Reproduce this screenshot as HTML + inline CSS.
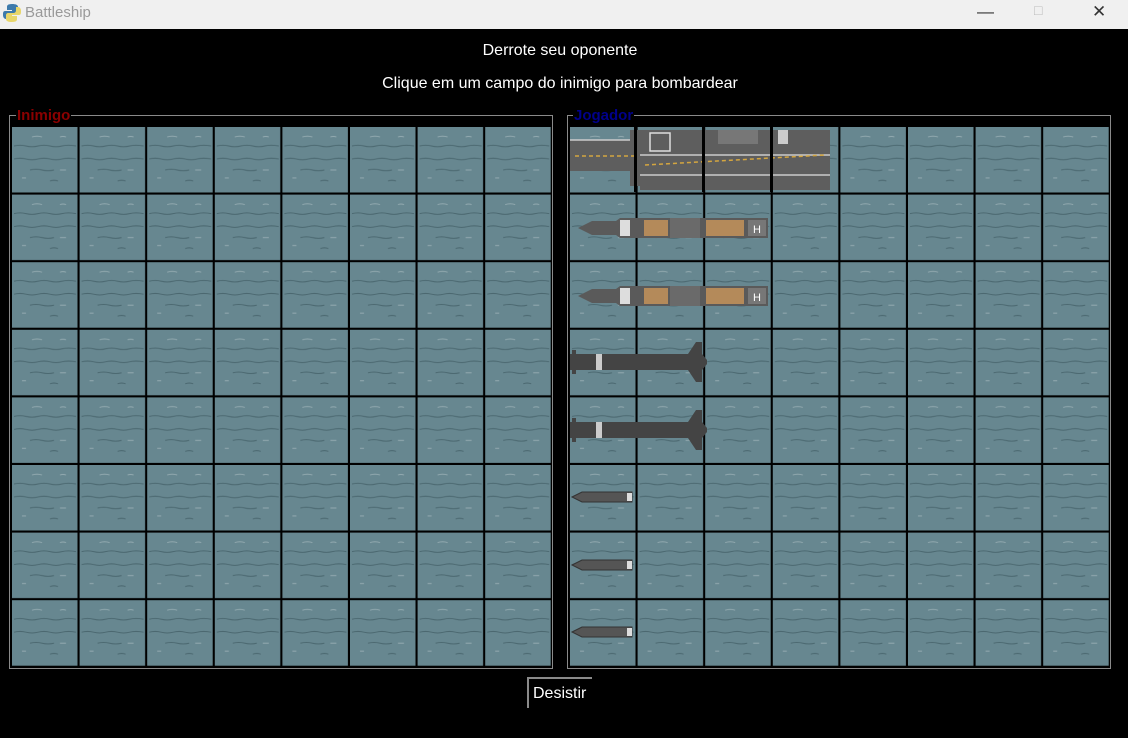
<!DOCTYPE html>
<html><head><meta charset="utf-8"><style>
html,body{margin:0;padding:0;width:1128px;height:738px;overflow:hidden;background:#000;font-family:"Liberation Sans",sans-serif}
#tb{position:absolute;left:0;top:0;width:1128px;height:29px;background:#f0f0f0}
#tb .t{position:absolute;left:25px;top:4px;font-size:15px;color:#999}
#tb .c{position:absolute;top:2px;font-size:17px;color:#333}
.txt{position:absolute;left:0;width:1120px;text-align:center;color:#fff;font-size:16px}
.lbl{position:absolute;top:107px;font-size:15px;font-weight:bold;background:#000;padding:0 1px;line-height:17px}
#btn{position:absolute;left:527px;top:677px;width:65px;height:31px;border-left:2px solid #8a8a8a;border-top:2px solid #8a8a8a;box-sizing:border-box;color:#fff;font-size:16px;padding:6px 0 0 4px}
</style></head><body>
<div id="tb">
<svg style="position:absolute;left:2px;top:3px" width="20" height="20" viewBox="0 0 20 20"><path d="M10 1C5 1 5 3 5 4v3h5v1H3C1 8 1 10 1 12s1 4 3 4h2v-3c0-2 1-3 3-3h5c1 0 2-1 2-2V4c0-2-2-3-6-3z" fill="#3d7aab"/><path d="M10 19c5 0 5-2 5-3v-3h-5v-1h7c2 0 2-2 2-4s-1-4-3-4h-2v3c0 2-1 3-3 3H6c-1 0-2 1-2 2v4c0 2 2 3 6 3z" fill="#e8d66a"/></svg>
<div class="t">Battleship</div>
<div class="c" style="left:977px">&#8212;</div>
<div class="c" style="left:1034px;font-size:14px;color:#bbb">&#9633;</div>
<div class="c" style="left:1092px">&#10005;</div>
</div>
<div class="txt" style="top:42px">Derrote seu oponente</div>
<div class="txt" style="top:75px">Clique em um campo do inimigo para bombardear</div>
<svg style="position:absolute;left:0;top:0" width="1128" height="738">
<defs>
<pattern id="wL" patternUnits="userSpaceOnUse" x="12" y="127" width="67.6" height="67.6"><g id="cell">
<rect width="67.6" height="67.6" fill="#000"/>
<rect x="0" y="0" width="65.5" height="65.5" fill="#678790"/>
<path d="M2 19q6-1.5 12 0t12 0t12 0t12 0t14 0" stroke="#4b6870" stroke-width="1" fill="none"/>
<path d="M2 32q6-1.5 12 0t12 0t12 0t12 0t14 0" stroke="#4b6870" stroke-width="1" fill="none"/>
<path d="M18 43q6-1.5 12 0t12 0" stroke="#4b6870" stroke-width="1" fill="none"/>
<path d="M38 54q4-1.5 8 0" stroke="#4b6870" stroke-width="1" fill="none"/>
<path d="M20 10q5-1.5 10 0M48 10q3-1 6 0M10 51h4M48 43h6" stroke="#93aab0" stroke-width="1" fill="none"/>
</g></pattern>
<pattern id="wR" patternUnits="userSpaceOnUse" x="570" y="127" width="67.6" height="67.6"><use href="#cell"/></pattern>
<g id="dd">
<path d="M0 0l14-7h24l4-3h148v20H42l-4-3H14z" fill="#5a5a5a"/>
<rect x="42" y="-8" width="10" height="16" fill="#ddd"/>
<rect x="66" y="-8" width="24" height="16" fill="#b48a5a"/>
<rect x="128" y="-8" width="38" height="16" fill="#b48a5a"/>
<rect x="92" y="-10" width="30" height="20" fill="#6a6a6a"/>
<rect x="170" y="-8" width="18" height="16" fill="#777"/>
<text x="175" y="5" font-size="11" fill="#fff" font-family="Liberation Sans">H</text>
</g>
<g id="sub">
<path d="M0 -8h118l8-12h6v12l5 6v4l-5 6v12h-6l-8-12H0z" fill="#444"/>
<rect x="26" y="-8" width="6" height="16" fill="#ccc"/>
<rect x="2" y="-12" width="4" height="24" fill="#444"/>
</g>
<g id="pb">
<path d="M0 0l10-5h50v10H10z" fill="#555" stroke="#333"/>
<rect x="55" y="-4" width="5" height="8" fill="#ddd"/>
</g>
</defs>
<rect x="9.5" y="115.5" width="543" height="553" fill="none" stroke="#8a8a8a"/>
<rect x="567.5" y="115.5" width="543" height="553" fill="none" stroke="#8a8a8a"/>
<rect x="12" y="127" width="540" height="540" fill="url(#wL)"/>
<rect x="570" y="127" width="540" height="540" fill="url(#wR)"/>
<path d="M570 140h60v-10h200v60H640v-4h-10v-15h-60z" fill="#5e5e5e"/>
<path d="M570 140h60M640 155h190M640 175h190" stroke="#ccc" stroke-width="1.5" fill="none"/>
<path d="M575 156h60M645 165l180-10" stroke="#d4a640" stroke-width="1.5" stroke-dasharray="4 3"/>
<rect x="650" y="133" width="20" height="18" fill="none" stroke="#ddd" stroke-width="1.5"/>
<rect x="718" y="130" width="40" height="14" fill="#777"/>
<rect x="778" y="130" width="10" height="14" fill="#ccc"/>
<rect x="634" y="127" width="3" height="65" fill="#000"/>
<rect x="702" y="127" width="3" height="65" fill="#000"/>
<rect x="770" y="127" width="3" height="65" fill="#000"/>
<use href="#dd" x="578" y="228"/>
<use href="#dd" x="578" y="296"/>
<use href="#sub" x="570" y="362"/>
<use href="#sub" x="570" y="430"/>
<use href="#pb" x="572" y="497"/>
<use href="#pb" x="572" y="565"/>
<use href="#pb" x="572" y="632"/>
</svg>
<div class="lbl" style="left:16px;color:#8b0000">Inimigo</div>
<div class="lbl" style="left:573px;color:#00008b">Jogador</div>
<div id="btn">Desistir</div>
</body></html>
